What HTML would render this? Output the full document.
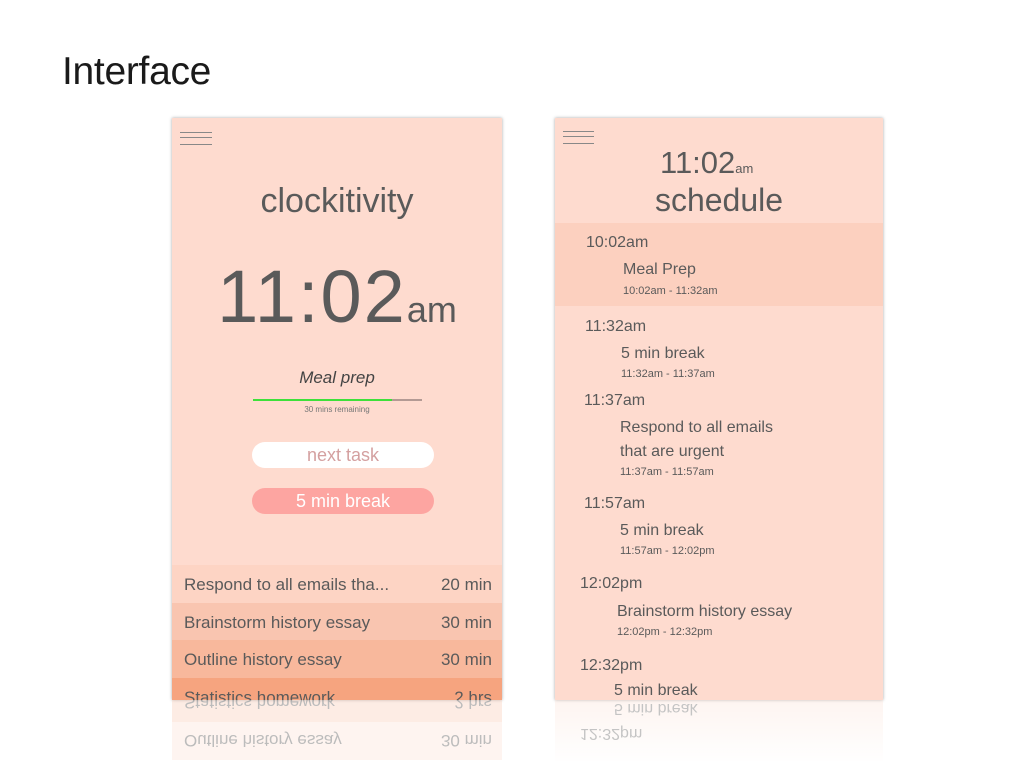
<!DOCTYPE html>
<html><head><meta charset="utf-8"><style>
*{margin:0;padding:0;box-sizing:border-box}
body{width:1024px;height:762px;background:#fff;position:relative;overflow:hidden;font-family:"Liberation Sans",sans-serif;color:#5a5a5a}
.a{position:absolute;white-space:nowrap;line-height:1}
.ph{position:absolute;top:118px;height:582px;background:#fedbcf;box-shadow:0 0 3px rgba(0,0,0,.35);overflow:hidden}
.hb{position:absolute;height:1px;background:#888}
.row{position:absolute;left:0;width:330px;height:38px;font-size:17px}
.row span{position:absolute;top:10px}
.f{transform:scaleY(-1)}
</style></head><body>
<div class="a" style="left:62px;top:52px;font-size:39px;color:#1a1a1a;letter-spacing:-0.3px">Interface</div>

<div class="ph" style="left:172px;width:330px">
  <div class="hb" style="left:8px;top:14px;width:32px"></div>
  <div class="hb" style="left:8px;top:19px;width:32px"></div>
  <div class="hb" style="left:8px;top:26px;width:32px"></div>
  <div class="a" style="left:0;width:330px;text-align:center;top:66px;font-size:34px">clockitivity</div>
  <div class="a" style="left:0;width:330px;text-align:center;top:142px;font-size:74px;letter-spacing:2px">11:02<span style="font-size:36px;letter-spacing:0">am</span></div>
  <div class="a" style="left:0;width:330px;text-align:center;top:251px;font-size:17px;font-style:italic;color:#444">Meal prep</div>
  <div style="position:absolute;left:81px;top:281px;width:169px;height:2px;background:#b39a94"></div>
  <div style="position:absolute;left:81px;top:281px;width:139px;height:2px;background:#3ee03a"></div>
  <div class="a" style="left:0;width:330px;text-align:center;top:288px;font-size:8px;color:#777">30 mins remaining</div>
  <div class="a" style="left:80px;top:324px;width:182px;height:26px;border-radius:13px;background:#fff;color:#d4a0a0;font-size:18px;text-align:center;line-height:26px">next task</div>
  <div class="a" style="left:80px;top:370px;width:182px;height:26px;border-radius:13px;background:#fda5a1;color:#fff;font-size:18px;text-align:center;line-height:26px">5 min break</div>
  <div class="row" style="top:447px;background:#fdd4c4"><span style="left:12px">Respond to all emails tha...</span><span style="right:10px">20 min</span></div>
  <div class="row" style="top:485px;background:#f9c5b0"><span style="left:12px">Brainstorm history essay</span><span style="right:10px">30 min</span></div>
  <div class="row" style="top:522px;background:#f8b89c"><span style="left:12px">Outline history essay</span><span style="right:10px">30 min</span></div>
  <div class="row" style="top:560px;background:#f6a47f"><span style="left:12px">Statistics homework</span><span style="right:10px">2 hrs</span></div>
</div>
<div style="position:absolute;left:172px;top:700px;width:330px;height:62px;opacity:.4;overflow:hidden">
  <div class="row f" style="top:-16px;background:#fbd0bd"><span style="left:12px">Statistics homework</span><span style="right:10px">2 hrs</span></div>
  <div class="row f" style="top:22px;background:#fde5da"><span style="left:12px">Outline history essay</span><span style="right:10px">30 min</span></div>
</div>

<div class="ph" style="left:555px;width:328px">
  <div class="hb" style="left:8px;top:13px;width:31px"></div>
  <div class="hb" style="left:8px;top:18px;width:31px"></div>
  <div class="hb" style="left:8px;top:25px;width:31px"></div>
  <div class="a" style="left:105px;top:29px;font-size:31px">11:02<span style="font-size:13px">am</span></div>
  <div class="a" style="left:0;width:328px;text-align:center;top:66px;font-size:32px">schedule</div>
  <div style="position:absolute;left:0;top:105px;width:328px;height:83px;background:#fcd0bf"></div>
  <div class="a" style="left:31px;top:117px;font-size:16px">10:02am</div>
  <div class="a" style="left:68px;top:144px;font-size:16px">Meal Prep</div>
  <div class="a" style="left:68px;top:168px;font-size:11px">10:02am - 11:32am</div>
  <div class="a" style="left:30px;top:201px;font-size:16px">11:32am</div>
  <div class="a" style="left:66px;top:228px;font-size:16px">5 min break</div>
  <div class="a" style="left:66px;top:251px;font-size:11px">11:32am - 11:37am</div>
  <div class="a" style="left:29px;top:275px;font-size:16px">11:37am</div>
  <div class="a" style="left:65px;top:302px;font-size:16px">Respond to all emails</div>
  <div class="a" style="left:65px;top:326px;font-size:16px">that are urgent</div>
  <div class="a" style="left:65px;top:349px;font-size:11px">11:37am - 11:57am</div>
  <div class="a" style="left:29px;top:378px;font-size:16px">11:57am</div>
  <div class="a" style="left:65px;top:405px;font-size:16px">5 min break</div>
  <div class="a" style="left:65px;top:428px;font-size:11px">11:57am - 12:02pm</div>
  <div class="a" style="left:25px;top:458px;font-size:16px">12:02pm</div>
  <div class="a" style="left:62px;top:486px;font-size:16px">Brainstorm history essay</div>
  <div class="a" style="left:62px;top:509px;font-size:11px">12:02pm - 12:32pm</div>
  <div class="a" style="left:25px;top:540px;font-size:16px">12:32pm</div>
  <div class="a" style="left:59px;top:565px;font-size:16px">5 min break</div>
</div>
<div style="position:absolute;left:555px;top:700px;width:328px;height:62px;opacity:.35;overflow:hidden">
  <div style="position:absolute;left:0;top:0;width:328px;height:62px;background:linear-gradient(#fde3d8,#fff)"></div>
  <div class="a f" style="left:59px;top:0px;font-size:16px">5 min break</div>
  <div class="a f" style="left:25px;top:25px;font-size:16px">12:32pm</div>
</div>
</body></html>
